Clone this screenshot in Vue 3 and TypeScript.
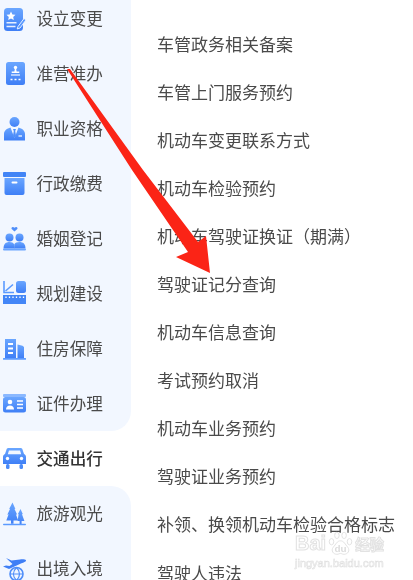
<script setup lang="ts">
interface Item { label: string; icon: string }
const groupA: Item[] = [
  { label: '设立变更', icon: 'edit' },
  { label: '准营准办', icon: 'permit' },
  { label: '职业资格', icon: 'person' },
  { label: '行政缴费', icon: 'box' },
  { label: '婚姻登记', icon: 'couple' },
  { label: '规划建设', icon: 'plan' },
  { label: '住房保障', icon: 'house' },
  { label: '证件办理', icon: 'card' }
]
const active: Item = { label: '交通出行', icon: 'car' }
const groupB: Item[] = [
  { label: '旅游观光', icon: 'tree' },
  { label: '出境入境', icon: 'plane' }
]
const services: string[] = [
  '车管政务相关备案', '车管上门服务预约', '机动车变更联系方式', '机动车检验预约',
  '机动车驾驶证换证（期满）', '驾驶证记分查询', '机动车信息查询', '考试预约取消',
  '机动车业务预约', '驾驶证业务预约', '补领、换领机动车检验合格标志', '驾驶人违法'
]
</script>

<template>
  <div class="page">
    <svg width="0" height="0" class="defs">
      <defs>
        <linearGradient id="blue" x1="0" y1="0" x2="0" y2="1">
          <stop offset="0" stop-color="#6aa6ff" />
          <stop offset="1" stop-color="#3f7ff6" />
        </linearGradient>
        <symbol id="edit" viewBox="0 0 23 26" overflow="visible">
          <rect x="1" y="2" width="19" height="23" rx="3.500" fill="url(#blue)" />
          <path d="M8 5.500l1.400 2.900 3.100.4-2.300 2.100.6 3.100-2.800-1.500-2.800 1.500.6-3.100-2.300-2.100 3.100-.4z" fill="#fff" />
          <path d="M3.500 16.800h10M3.500 20.600h9" stroke="#e8f0ff" stroke-width="1.500" />
          <path d="M15 20.500l6-8 2 1.500-6 8-2.800 1z" fill="#5b9aff" stroke="#f2f7ff" stroke-width=".9" />
        </symbol>
        <symbol id="permit" viewBox="0 0 23 26">
          <rect x="3" y="1" width="19" height="23" rx="2.500" fill="url(#blue)" />
          <circle cx="12.500" cy="6.500" r="1.700" fill="#fff" />
          <path d="M11.800 8h1.400l.4 2.400h2.700v1.500H8.700v-1.500h2.700z" fill="#fff" />
          <path d="M8 14h9" stroke="#fff" stroke-width="1.100" />
          <path d="M7.500 18.500h2M11.500 18.500h2M15.500 18.500h2" stroke="#fff" stroke-width="1.500" />
        </symbol>
        <symbol id="person" viewBox="0 0 23 26">
          <circle cx="11.500" cy="6" r="5" fill="url(#blue)" />
          <path d="M1 24.500v-6.500c0-3.500 3-5.500 6.500-6.500l4 10.500 4-10.500c3.500 1 6.500 3 6.500 6.500v6.500z" fill="url(#blue)" />
          <path d="M10 13h3l-.8 2 .8 4.500-1.500 2.500-1.500-2.500.8-4.500z" fill="#4f8ef9" />
          <path d="M15.500 20h3.500" stroke="#fff" stroke-width="1.200" />
        </symbol>
        <symbol id="box" viewBox="0 0 23 26">
          <rect x="0" y="1" width="23" height="5" rx="1" fill="#4285f6" />
          <path d="M1.500 7h20v15a2 2 0 0 1-2 2h-16a2 2 0 0 1-2-2z" fill="url(#blue)" />
          <rect x="8.500" y="10.500" width="6" height="2" rx="1" fill="#fff" />
        </symbol>
        <symbol id="couple" viewBox="0 0 23 26">
          <path d="M11.500 5.500l-2.800-2.600c-1-1.200 1-2.900 2.800-1.100 1.800-1.800 3.800-.1 2.800 1.100z" fill="#4f8ef9" />
          <circle cx="6.500" cy="11.500" r="4" fill="url(#blue)" />
          <circle cx="16.500" cy="11.500" r="4" fill="url(#blue)" />
          <path d="M.5 22.500c0-4.500 2.300-6.500 6-6.500 2.300 0 3.700.7 4.600 2.200.5 1.200.6 2.800.6 4.300z" fill="url(#blue)" />
          <path d="M11.300 18.200c.9-1.500 2.400-2.200 5.200-2.200 3.700 0 6 2 6 6.500H11.300z" fill="url(#blue)" />
          <rect x="0" y="22.500" width="23" height="2" rx="1" fill="#6aa5ff" />
        </symbol>
        <symbol id="plan" viewBox="0 0 23 26">
          <path d="M1 0v11.500h10" fill="none" stroke="#5b9aff" stroke-width="1.600" />
          <path d="M2.500 10l7.500-6.500" stroke="#5b9aff" stroke-width="1.600" />
          <rect x="13" y="0" width="10" height="12" rx="2.500" fill="url(#blue)" />
          <rect x="0" y="14" width="23" height="9" fill="#4386f7" />
          <path d="M3 15.500v1.500M6.500 15.500v1.500M10 15.500v1.500M13.500 15.500v1.500M17 15.500v1.500M20.500 15.500v1.500" stroke="#fff" stroke-width="1.300" />
        </symbol>
        <symbol id="house" viewBox="0 0 23 26">
          <path d="M2 3h11v19H2z" fill="url(#blue)" />
          <path d="M14.500 8.500l5 1.200 1.500 1.300v11h-6.500z" fill="url(#blue)" />
          <path d="M5 8h5M5 12.500h5M5 17h5" stroke="#fff" stroke-width="1.800" />
          <rect x="0" y="22" width="23" height="1.800" rx=".5" fill="#5b9aff" />
        </symbol>
        <symbol id="card" viewBox="0 0 23 26">
          <rect x="0" y="3" width="23" height="3" rx="1" fill="#8ab8ff" />
          <rect x="0" y="6" width="23" height="15.500" rx="2.500" fill="url(#blue)" />
          <circle cx="7" cy="11" r="2.300" fill="#fff" />
          <path d="M3 18.500c0-2.700 1.800-4 4-4s4 1.300 4 4z" fill="#fff" />
          <path d="M14 10h6M14 13.500h6M14 17h6" stroke="#fff" stroke-width="1.400" />
        </symbol>
        <symbol id="car" viewBox="0 0 23 26">
          <path d="M5.500 2h12c1 0 1.700.5 2 1.500L21 8c1.300.6 2 1.700 2 3v7H0v-7c0-1.300.7-2.400 2-3l1.500-4.500c.3-1 1-1.500 2-1.500z" fill="url(#blue)" />
          <path d="M6 4.500h11l1.200 3.800H4.800z" fill="#f2f7ff" />
          <circle cx="4.500" cy="12.500" r="1.700" fill="#fff" />
          <circle cx="18.500" cy="12.500" r="1.700" fill="#fff" />
          <rect x="3" y="18" width="3.500" height="5" rx="1.500" fill="#4a8af8" />
          <rect x="16.500" y="18" width="3.500" height="5" rx="1.500" fill="#4a8af8" />
        </symbol>
        <symbol id="tree" viewBox="0 0 23 26">
          <path d="M9.500 1.500l2.900 6.500-1-.3 2.800 6-1.300-.4 2.300 6.200h-4.700v3.300H8v-3.300H3.300l2.300-6.200-1.300.4 2.800-6-1 .3z" fill="url(#blue)" />
          <path d="M17.500 8l2.400 5.300-1-.2 2.500 6.900h-2.800v3.300h-2v-3.300h-2l1-7-.8.200z" fill="url(#blue)" />
          <rect x="0" y="22.800" width="23" height="1.500" rx=".7" fill="#5b9aff" />
        </symbol>
        <symbol id="plane" viewBox="0 0 23 26">
          <path d="M3 2l5.500 2.500L17 3.500c2.800-.4 5.500 0 6 .8.300 1-1.800 2-4.500 3L6 13 0 10.500l3-1 3.500.5 3-2z" fill="#3f7ff6" />
          <circle cx="13.500" cy="18" r="6.500" fill="none" stroke="#4f8ef9" stroke-width="1.600" />
          <path d="M7 18h13M13.500 11.500c-4 4-4 9 0 13M13.500 11.500c4 4 4 9 0 13" fill="none" stroke="#4f8ef9" stroke-width="1.200" />
        </symbol>
      </defs>
    </svg>

    <aside class="sidebar">
      <section class="group group-a">
        <div v-for="it in groupA" :key="it.label" class="row">
          <svg class="ico"><use :href="'#' + it.icon" /></svg>
          <span class="name">{{ it.label }}</span>
        </div>
      </section>
      <div class="row row-active">
        <svg class="ico"><use :href="'#' + active.icon" /></svg>
        <span class="name">{{ active.label }}</span>
      </div>
      <section class="group group-b">
        <div v-for="it in groupB" :key="it.label" class="row">
          <svg class="ico"><use :href="'#' + it.icon" /></svg>
          <span class="name">{{ it.label }}</span>
        </div>
      </section>
    </aside>

    <main class="list">
      <div v-for="s in services" :key="s" class="item">{{ s }}</div>
    </main>

    <svg class="arrow" width="413" height="580" viewBox="0 0 413 580">
      <polygon points="67,69 70,69 143,170 198,242 206,236 210,273 176,257 188,252 132,170" fill="#fb2416" />
    </svg>

    <div class="mark">
      <div class="mark-top">
        <span class="bai">Bai</span>
        <svg class="paw" width="27" height="27" viewBox="0 0 30 30">
          <g fill="#fff" stroke="#e0e0e0" stroke-width="1">
            <ellipse cx="5" cy="13" rx="2.500" ry="3.500" />
            <ellipse cx="11" cy="6" rx="2.500" ry="3.500" />
            <ellipse cx="19" cy="6" rx="2.500" ry="3.500" />
            <ellipse cx="25" cy="13" rx="2.500" ry="3.500" />
            <path d="M15 12c-4 0-5 4-8 7-3 4 0 8 4 8 2 0 3-1 4-1s2 1 4 1c4 0 7-4 4-8-3-3-4-7-8-7z" />
          </g>
          <text x="15" y="24" text-anchor="middle" class="du">du</text>
        </svg>
        <span class="jy">经验</span>
      </div>
      <div class="mark-url">jingyan.baidu.com</div>
    </div>
  </div>
</template>

<style scoped>
.page {
  position: relative;
  display: flex;
  width: 413px;
  height: 580px;
  overflow: hidden;
  background: #fff;
  font-family: "Noto Sans CJK SC", "Noto Sans", sans-serif;
  filter: blur(0.35px);
}
.defs { position: absolute; }
.sidebar {
  display: flex;
  flex-direction: column;
  flex: none;
  width: 131px;
  margin-top: -9px;
}
.group { background: #f2f7ff; }
.group-a { border-bottom-right-radius: 20px; }
.group-b { border-top-right-radius: 20px; padding-bottom: 40px; }
.row {
  display: flex;
  align-items: center;
  flex: none;
  height: 55px;
  padding-left: 3px;
  box-sizing: border-box;
}
.ico { flex: none; width: 23px; height: 26px; margin-right: 10.500px; overflow: visible; }
.name { font-size: 16.600px; color: #4a4a4a; white-space: nowrap; position: relative; top: -.5px; }
.row-active .name { color: #333; font-weight: 500; }
.list {
  flex: 1;
  padding: 19.500px 0 0 26px;
  min-width: 0;
}
.item {
  height: 48.100px;
  line-height: 48.100px;
  font-size: 17px;
  color: #4a4a4a;
  white-space: nowrap;
}
.arrow { position: absolute; left: 0; top: 0; pointer-events: none; }
.mark {
  position: absolute;
  left: 295px;
  top: 530px;
  width: 92px;
  color: #fff;
}
.mark-top { display: flex; align-items: center; height: 27px; gap: 1px; }
.bai, .jy {
  font-family: "Liberation Sans", "Noto Sans CJK SC", sans-serif;
  font-size: 20px;
  font-weight: 700;
  color: #fff;
  -webkit-text-stroke: 1px #e2e2e2;
}
.jy { font-size: 14.500px; }
.du {
  font-family: "Liberation Sans", sans-serif;
  font-size: 11px;
  font-weight: 700;
  fill: #dcdcdc;
}
.mark-url {
  font-family: "Liberation Sans", sans-serif;
  font-size: 11px;
  line-height: 12px;
  color: #fff;
  -webkit-text-stroke: .6px #e0e0e0;
  white-space: nowrap;
}
</style>
